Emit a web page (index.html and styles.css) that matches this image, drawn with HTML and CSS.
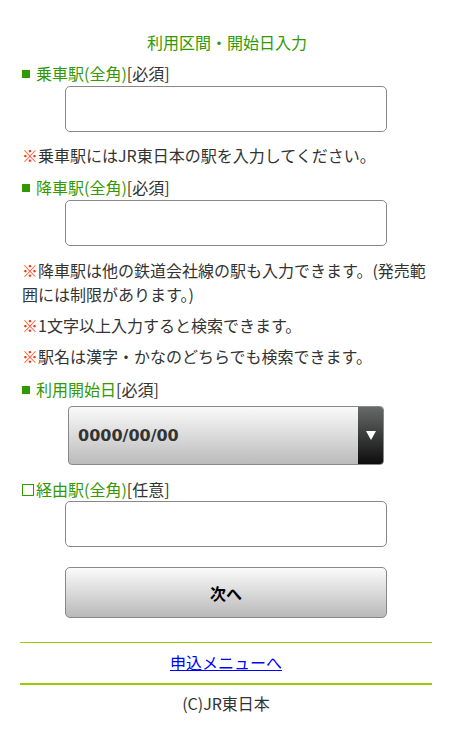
FILE: index.html
```html
<!DOCTYPE html>
<html lang="ja">
<head>
<meta charset="utf-8">
<title>利用区間・開始日入力</title>
<link rel="stylesheet" href="styles.css">
</head>
<body>
<div class="page">
  <h1 class="title">利用区間・開始日入力</h1>

  <div class="label lbl-1"><span class="sq"></span><span class="g">乗車駅(全角)</span>[必須]</div>
  <input class="text" type="text">
  <p class="note note-a"><span class="kome">※</span>乗車駅にはJR東日本の駅を入力してください。</p>

  <div class="label lbl-2"><span class="sq"></span><span class="g">降車駅(全角)</span>[必須]</div>
  <input class="text" type="text">
  <p class="note note-b"><span class="kome">※</span>降車駅は他の鉄道会社線の駅も入力できます。(発売範囲には制限があります。)</p>
  <p class="note note-c"><span class="kome">※</span>1文字以上入力すると検索できます。</p>
  <p class="note note-c"><span class="kome">※</span>駅名は漢字・かなのどちらでも検索できます。</p>

  <div class="label lbl-3"><span class="sq"></span><span class="g">利用開始日</span>[必須]</div>
  <div class="select">
    <span class="select-val">0000/00/00</span>
    <span class="select-btn"><span class="tri"></span></span>
  </div>

  <div class="label lbl-4"><span class="sq-o"></span><span class="g">経由駅(全角)</span>[任意]</div>
  <input class="text text-4" type="text">

  <button class="next" type="button">次へ</button>

  <div class="menu"><a href="#">申込メニューへ</a></div>
  <div class="copy">(C)JR東日本</div>
</div>
</body>
</html>
```

FILE: styles.css
```css
* { box-sizing: border-box; }
body {
  margin: 0;
  background: #fff;
  font-family: "Noto Sans CJK JP", "Noto Sans", sans-serif;
  font-size: 16px;
  color: #333;
}
.page {
  padding: 0 20px 30px 22px;
  width: 452px;
}
.title {
  margin: 30px 0 0;
  font-size: 16px;
  font-weight: normal;
  line-height: 24px;
  text-align: center;
  color: #339900;
  padding-right: 0;
}
.label {
  line-height: 24px;
  display: flex;
  align-items: center;
}
.lbl-1 { margin-top: 7px; }
.lbl-2 { margin-top: 8px; }
.lbl-3 { margin-top: 9px; }
.lbl-4 { margin-top: 12px; }
.g { color: #339900; }
.sq {
  display: inline-block;
  width: 8px;
  height: 8px;
  background: #339900;
  margin: 1px 6px 0 0;
}
.sq-o {
  display: inline-block;
  width: 12px;
  height: 12px;
  border: 1.5px solid #339900;
  margin: 1px 2px 0 0;
}
.text {
  display: block;
  width: 322px;
  height: 46px;
  margin: 1px 0 0 43px;
  border: 1px solid #888;
  border-radius: 5px;
  background: #fff;
  font-size: 16px;
}
.text-4 { margin-top: 0; }
.note {
  margin: 0;
  line-height: 24px;
}
.note-a { margin-top: 11px; }
.note-b { margin-top: 12px; }
.note-c { margin-top: 7px; }
.kome { color: #ff3300; }
.select {
  display: flex;
  width: 316px;
  height: 59px;
  margin: 5px 0 0 46px;
  border: 1px solid #888;
  border-radius: 4px;
  overflow: hidden;
  background: linear-gradient(#fafafa, #bbbbbb);
}
.select-val {
  flex: 1;
  display: flex;
  align-items: center;
  padding-left: 9px;
  font-family: "DejaVu Sans", sans-serif;
  font-weight: bold;
  font-size: 16px;
  color: #333;
}
.select-btn {
  width: 25px;
  display: flex;
  align-items: center;
  justify-content: center;
  background: linear-gradient(#666a68, #0d0d0d);
}
.tri {
  width: 0;
  height: 0;
  border-left: 5px solid transparent;
  border-right: 5px solid transparent;
  border-top: 9px solid #fff;
}
.next {
  display: block;
  width: 322px;
  height: 51px;
  margin: 20px 0 0 43px;
  border: 1px solid #888;
  border-radius: 5px;
  background: linear-gradient(#fbfbfb, #b9b9b9);
  font-family: "Noto Sans CJK JP", sans-serif;
  font-size: 16px;
  font-weight: bold;
  color: #000;
}
.menu {
  margin: 24px 0 0 -2px;
  border-top: 1px solid #99cc00;
  border-bottom: 2px solid #99cc00;
  padding: 7px 0 9px;
  line-height: 24px;
  text-align: center;
}
.menu a { color: #0000ff; text-decoration: underline; }
.copy {
  margin-left: -2px;
  padding-top: 6px;
  line-height: 24px;
  text-align: center;
  color: #333;
}
```
